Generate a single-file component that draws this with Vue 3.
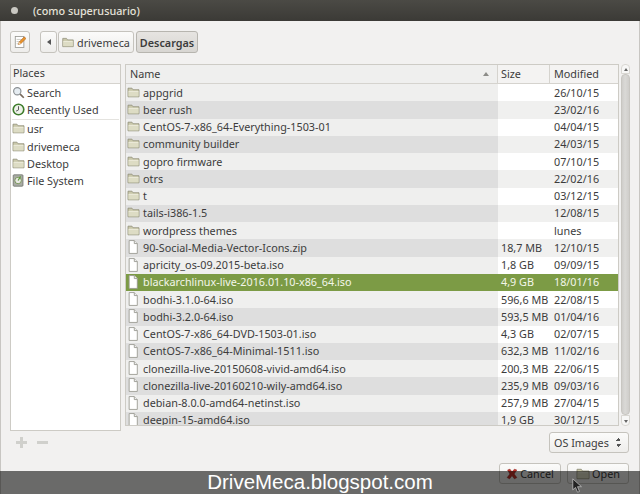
<template>
  <div class="window">
    <div class="titlebar">
      <span class="close-dot"></span>
      <span class="title">(como superusuario)</span>
    </div>
    <div class="body">
      <div class="toolbar">
        <button class="tool edit">
          <svg width="12" height="14" viewBox="0 0 14 16">
            <rect x="1.500" y="1.500" width="10" height="13" fill="#fff" stroke="#9a9a94" />
            <path d="M3 5h6M3 7.500h5M3 10h4" stroke="#c4c4be" />
            <path d="M5 11l1-3 6-6 2 2-6 6z" fill="#e8942c" stroke="#a3561a" stroke-width=".6" />
            <path d="M5 11l1-3 2 2z" fill="#f6dcb0" />
          </svg>
        </button>
        <div class="path">
          <button class="seg back"><span class="arrow-left"></span></button>
          <button class="seg crumb">
            <svg class="folder" width="12" height="11" viewBox="0 0 16 14"><use href="#folder-icon" /></svg>
            drivemeca
          </button>
          <button class="seg current">Descargas</button>
        </div>
      </div>

      <div class="panes">
        <div class="places">
          <div class="places-head">Places</div>
          <div class="place" v-for="p in placesTop" :key="p.name">
            <svg v-if="p.icon == 'search'" width="13" height="13" viewBox="0 0 16 16">
              <circle cx="6.500" cy="6.500" r="4.500" fill="#e6edf2" stroke="#8a8f92" stroke-width="1.400" />
              <path d="M10 10l4.500 4.500" stroke="#77685a" stroke-width="2" />
            </svg>
            <svg v-else width="13" height="13" viewBox="0 0 16 16">
              <circle cx="8" cy="8" r="6.500" fill="#eef2ea" stroke="#3f7d2c" stroke-width="2" />
              <path d="M8 4v4.500l-3 1.500" fill="none" stroke="#555" stroke-width="1.200" />
            </svg>
            <span>{{ p.name }}</span>
          </div>
          <div class="places-sep"></div>
          <div class="place" v-for="p in placesBottom" :key="p.name">
            <svg v-if="p.icon == 'folder'" class="folder" width="13" height="11" viewBox="0 0 16 14"><use href="#folder-icon" /></svg>
            <svg v-else width="13" height="13" viewBox="0 0 16 16">
              <rect x="1.500" y="1" width="12" height="14" rx="1" fill="#a9aca4" stroke="#6f726b" />
              <circle cx="7.500" cy="8" r="4" fill="#e9e9e4" stroke="#6c8c4a" />
              <path d="M7.500 8l3-5" stroke="#5c9a3a" stroke-width="1.500" />
            </svg>
            <span>{{ p.name }}</span>
          </div>
        </div>

        <div class="files">
          <div class="list">
            <div class="row head">
              <div class="cell name">Name<span class="sort"></span></div>
              <div class="cell size">Size</div>
              <div class="cell date">Modified</div>
            </div>
            <div
              class="row"
              v-for="(f, i) in files"
              :key="f.name"
              :class="{ even: i % 2 == 1, selected: f.name == selectedFile }"
            >
              <div class="cell name">
                <svg v-if="f.dir" class="folder" width="13" height="11" viewBox="0 0 16 14"><use href="#folder-icon" /></svg>
                <svg v-else class="file" width="12" height="14" viewBox="0 0 14 16">
                  <path d="M2.500 .5h6l3.500 3.500v11.500h-9.500z" fill="#fff" stroke="#97978f" />
                  <path d="M8.500 .5v3.500h3.500" fill="#eee" stroke="#97978f" />
                </svg>
                <span>{{ f.name }}</span>
              </div>
              <div class="cell size">{{ f.size }}</div>
              <div class="cell date">{{ f.date }}</div>
            </div>
          </div>
          <div class="scrollbar">
            <div class="stepper top"><span class="sb-arrow up"></span></div>
            <div class="thumb"></div>
            <div class="stepper bottom"><span class="sb-arrow down"></span></div>
          </div>
        </div>
      </div>

      <div class="under">
        <div class="plus-minus">
          <span class="plus"></span>
          <span class="minus"></span>
        </div>
        <button class="filter">OS Images<span class="updown"></span></button>
      </div>

      <div class="actions">
        <button class="action">
          <svg width="12" height="12" viewBox="0 0 15 14">
            <path d="M2 2l3-1 2.500 3.500 3-3.500 3 1-3.500 5 3.500 4.500-3 1.500-3-4-3 4-3-1.500 3.500-4.500z" fill="#c8322b" stroke="#8f1f1a" stroke-width=".7" />
          </svg>
          Cancel
        </button>
        <button class="action">
          <svg class="folder" width="14" height="12" viewBox="0 0 16 14"><use href="#folder-icon" /></svg>
          Open
        </button>
      </div>
    </div>

    <div class="banner">DriveMeca.blogspot.com</div>
    <svg class="pointer" width="11" height="15" viewBox="0 0 14 19">
      <path d="M1 1v14l3.500-3 2.500 6 2.500-1-2.500-6h5z" fill="#222" stroke="#ddd" stroke-width=".8" />
    </svg>

    <svg width="0" height="0" class="defs">
      <defs>
        <g id="folder-icon">
          <path d="M1 12.500v-11h5l1.500 2h7.500v9z" fill="#c9c7a9" stroke="#8f8e78" />
          <path d="M1.500 5h13v7h-13z" fill="#dddcc4" />
          <path d="M2 5.500h12" stroke="#f1f0e2" />
        </g>
      </defs>
    </svg>
  </div>
</template>

<script setup>
const selectedFile = "blackarchlinux-live-2016.01.10-x86_64.iso";

const placesTop = [
  { name: "Search", icon: "search" },
  { name: "Recently Used", icon: "recent" },
];
const placesBottom = [
  { name: "usr", icon: "folder" },
  { name: "drivemeca", icon: "folder" },
  { name: "Desktop", icon: "folder" },
  { name: "File System", icon: "disk" },
];

const files = [
  { name: "appgrid", size: "", date: "26/10/15", dir: true },
  { name: "beer rush", size: "", date: "23/02/16", dir: true },
  { name: "CentOS-7-x86_64-Everything-1503-01", size: "", date: "04/04/15", dir: true },
  { name: "community builder", size: "", date: "24/03/15", dir: true },
  { name: "gopro firmware", size: "", date: "07/10/15", dir: true },
  { name: "otrs", size: "", date: "22/02/16", dir: true },
  { name: "t", size: "", date: "03/12/15", dir: true },
  { name: "tails-i386-1.5", size: "", date: "12/08/15", dir: true },
  { name: "wordpress themes", size: "", date: "lunes", dir: true },
  { name: "90-Social-Media-Vector-Icons.zip", size: "18,7 MB", date: "12/10/15" },
  { name: "apricity_os-09.2015-beta.iso", size: "1,8 GB", date: "09/09/15" },
  { name: "blackarchlinux-live-2016.01.10-x86_64.iso", size: "4,9 GB", date: "18/01/16" },
  { name: "bodhi-3.1.0-64.iso", size: "596,6 MB", date: "22/08/15" },
  { name: "bodhi-3.2.0-64.iso", size: "593,5 MB", date: "01/04/16" },
  { name: "CentOS-7-x86_64-DVD-1503-01.iso", size: "4,3 GB", date: "02/07/15" },
  { name: "CentOS-7-x86_64-Minimal-1511.iso", size: "632,3 MB", date: "11/02/16" },
  { name: "clonezilla-live-20150608-vivid-amd64.iso", size: "200,3 MB", date: "22/06/15" },
  { name: "clonezilla-live-20160210-wily-amd64.iso", size: "235,9 MB", date: "09/03/16" },
  { name: "debian-8.0.0-amd64-netinst.iso", size: "257,9 MB", date: "27/04/15" },
  { name: "deepin-15-amd64.iso", size: "1,9 GB", date: "30/12/15" },
];
</script>

<style>
html,
body {
  margin: 0;
  background: #f2f1f0;
}
</style>

<style scoped>
.window {
  width: 640px;
  height: 494px;
  position: relative;
  overflow: hidden;
  display: flex;
  flex-direction: column;
  background: #f2f1f0;
  font-family: "Noto Sans", sans-serif;
  font-size: 10.800px;
  color: #3c3c3c;
}
button {
  font: inherit;
  color: inherit;
  padding: 0;
}
.defs {
  position: absolute;
}
.titlebar {
  height: 21px;
  flex: none;
  display: flex;
  align-items: center;
  gap: 15px;
  padding-left: 11px;
  background: linear-gradient(#4b4a45, #3b3a36);
}
.close-dot {
  width: 7px;
  height: 7px;
  border-radius: 50%;
  background: #c9c8c2;
}
.title {
  color: #e6e2d9;
  font-size: 10.800px;
  font-weight: 500;
}
.body {
  flex: 1;
  display: flex;
  flex-direction: column;
  padding: 10px 9px 0;
  border-left: 1px solid #c8c6c2;
  border-right: 1px solid #c8c6c2;
  box-sizing: border-box;
  min-height: 0;
}
.toolbar {
  display: flex;
  gap: 10px;
  height: 22px;
}
.tool,
.seg,
.filter,
.action {
  background: linear-gradient(#fbfbfa, #eeedeb);
  border: 1px solid #c5c3bd;
  border-radius: 3px;
  box-sizing: border-box;
}
.tool {
  width: 20px;
  display: flex;
  align-items: center;
  justify-content: center;
}
.path {
  display: flex;
  gap: 1px;
}
.seg {
  display: flex;
  align-items: center;
}
.back {
  width: 17px;
  justify-content: center;
}
.arrow-left {
  border-style: solid;
  border-width: 3px 4px 3px 0;
  border-color: transparent #555 transparent transparent;
}
.crumb {
  gap: 3px;
  padding-left: 3px;
  width: 76px;
  margin-right: 1px;
}
.current {
  width: 62px;
  justify-content: center;
  font-weight: 600;
  background: linear-gradient(#e6e4e1, #d8d6d2);
  border-color: #b7b5af;
}
.panes {
  display: flex;
  gap: 4px;
  margin-top: 11px;
  height: 367px;
  flex: none;
}
.places {
  width: 111px;
  flex: none;
  box-sizing: border-box;
  background: #fff;
  border: 1px solid #cdcbc5;
}
.places-head {
  height: 18px;
  line-height: 16px;
  padding-left: 2px;
  background: #f4f3f2;
  border-bottom: 1px solid #d5d3ce;
}
.place {
  height: 17.300px;
  display: flex;
  align-items: center;
  gap: 2px;
  padding-left: 1px;
  padding-bottom: 1px;
  box-sizing: border-box;
}
.place svg {
  flex: none;
}
.places-sep {
  height: 1px;
  margin: 0 1px 1px;
  background: #e4e3df;
}
.files {
  flex: 1;
  display: flex;
  gap: 2px;
  min-width: 0;
  height: 362px;
}
.list {
  flex: 1;
  min-width: 0;
  border: 1px solid #cdcbc5;
  background: #fff;
  overflow: hidden;
  box-sizing: border-box;
}
.row {
  display: grid;
  grid-template-columns: 372px 52px 1fr;
  height: 17.260px;
  white-space: nowrap;
}
.head {
  height: 18px;
  background: #f4f3f2;
  border-bottom: 1px solid #d5d3ce;
}
.head .cell {
  background: none;
  border-right: 1px solid #d5d3ce;
}
.head .date {
  border-right: none;
}
.cell {
  display: flex;
  align-items: center;
  padding-left: 4px;
  padding-bottom: 1px;
  box-sizing: border-box;
  overflow: hidden;
}
.size {
  padding-left: 3px;
}
.cell.name {
  background: #efefee;
  gap: 3px;
  padding-left: 1px;
  position: relative;
}
.head .cell.name {
  padding-left: 4px;
}
.even .cell {
  background: #f0f0ef;
}
.even .cell.name {
  background: #dedede;
}
.selected .cell,
.selected .cell.name {
  background: #7c9b45;
  color: #f3f6ea;
}
.folder {
  flex: none;
}
.file {
  flex: none;
  margin-right: 1px;
}
.sort {
  position: absolute;
  right: 8px;
  top: 7px;
  border-style: solid;
  border-width: 0 3px 4px 3px;
  border-color: transparent transparent #8c8c88 transparent;
}
.scrollbar {
  width: 9px;
  flex: none;
  display: flex;
  flex-direction: column;
  box-sizing: border-box;
}
.stepper {
  display: flex;
  justify-content: center;
  box-sizing: border-box;
  background: #f7f7f6;
  border: 1px solid #d9d7d2;
}
.stepper.top {
  height: 10px;
  padding-top: 3px;
  border-radius: 4px 4px 0 0;
}
.stepper.bottom {
  height: 11px;
  padding-top: 4px;
  border-radius: 0 0 4px 4px;
}
.thumb {
  flex: 1;
  background: linear-gradient(90deg, #cfcdca, #dad9d6 45%, #cfcdca);
  border-radius: 4px;
  border: 1px solid #c8c6c1;
  box-sizing: border-box;
}
.sb-arrow {
  width: 0;
  height: 0;
  border-style: solid;
  border-color: transparent;
}
.up {
  border-width: 0 2px 3px 2px;
  border-bottom-color: #666;
}
.down {
  border-width: 3px 2px 0 2px;
  border-top-color: #666;
}
.under {
  display: flex;
  justify-content: space-between;
  height: 32px;
  flex: none;
}
.plus-minus {
  display: flex;
  gap: 10px;
  padding: 6px 0 0 6px;
}
.plus {
  width: 11px;
  height: 11px;
  background:
    linear-gradient(#d0d0cc, #d0d0cc) center / 11px 3px no-repeat,
    linear-gradient(#d0d0cc, #d0d0cc) center / 3px 11px no-repeat;
}
.minus {
  width: 11px;
  height: 11px;
  background: linear-gradient(#d0d0cc, #d0d0cc) center / 11px 3px no-repeat;
}
.filter {
  margin: 1px 1px 0 0;
  width: 80px;
  height: 21px;
  display: flex;
  align-items: center;
  justify-content: space-between;
  padding: 0 7px 0 4px;
}
.updown {
  width: 5px;
  height: 9px;
  background:
    linear-gradient(135deg, transparent 50%, #555 50%) 0 0 / 3px 3px no-repeat,
    linear-gradient(225deg, transparent 50%, #555 50%) 100% 0 / 3px 3px no-repeat,
    linear-gradient(45deg, transparent 50%, #555 50%) 0 100% / 3px 3px no-repeat,
    linear-gradient(315deg, transparent 50%, #555 50%) 100% 100% / 3px 3px no-repeat;
}
.actions {
  display: flex;
  justify-content: flex-end;
  gap: 6px;
  padding-right: 1px;
}
.action {
  width: 62px;
  height: 21px;
  display: flex;
  align-items: center;
  justify-content: center;
  gap: 2px;
}
.banner {
  position: absolute;
  left: 0;
  right: 0;
  bottom: 0;
  height: 23px;
  line-height: 22px;
  text-align: center;
  color: #fff;
  font-family: "Liberation Sans", sans-serif;
  font-size: 20.500px;
  background: rgba(0, 0, 0, 0.56);
}
.pointer {
  position: absolute;
  left: 572px;
  top: 478px;
}
</style>
